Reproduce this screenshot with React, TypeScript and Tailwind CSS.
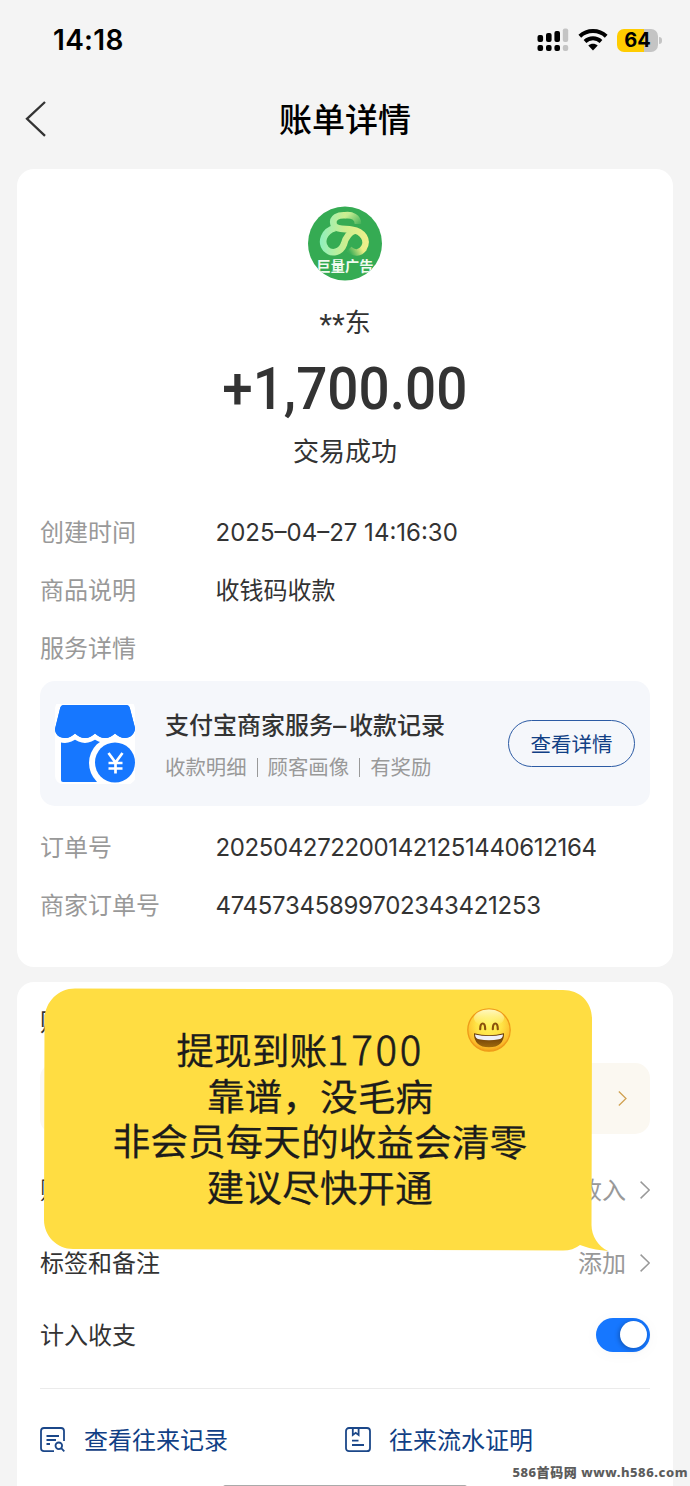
import type { ReactNode } from "react";

function StatusBar() {
  return (
    <header className="flex h-[80px] items-center justify-between pl-[53px] pr-[28px]">
      <span className="font-['Inter'] text-[28px] font-semibold leading-[80px] tracking-[0.3px] text-black">14:18</span>
      <div className="flex items-center">
        <svg width="32" height="24" viewBox="0 0 32 24" fill="#000">
          <rect x="0.5" y="7" width="5.6" height="7" rx="2" />
          <rect x="9" y="5" width="5.6" height="9" rx="2" />
          <rect x="17.4" y="3" width="5.6" height="11" rx="2" />
          <rect x="25.8" y="0.4" width="5.4" height="13.6" rx="2" fill="#c4c4c4" />
          <rect x="0.5" y="17" width="5.6" height="6" rx="2" />
          <rect x="9" y="17" width="5.6" height="6" rx="2" />
          <rect x="17.4" y="17" width="5.6" height="6" rx="2" />
          <rect x="25.8" y="17" width="5.4" height="6" rx="2" fill="#c4c4c4" />
        </svg>
        <svg className="ml-[9px]" width="30" height="22" viewBox="0 0 30 22">
          <path d="M1.8 7.2C9.2 0.3 20.8 0.3 28.2 7.2" fill="none" stroke="#000" strokeWidth="4" />
          <path d="M7 12.4C11.6 8.2 18.4 8.2 23 12.4" fill="none" stroke="#000" strokeWidth="4" />
          <path d="M10.3 16.6C13 14.2 17 14.2 19.7 16.6L15 21.4Z" fill="#000" />
        </svg>
        <div className="ml-[9px] flex h-[23px] w-[41px] items-center justify-center rounded-[7px] bg-linear-to-r from-[#ffcc00] from-65% to-[#c4c4c4] to-65%">
          <span className="font-['Inter'] text-[20px] font-bold leading-[23px] text-black">64</span>
        </div>
        <div className="ml-[1px] h-[7px] w-[3px] rounded-r-full bg-[#c4c4c4]" />
      </div>
    </header>
  );
}

function Avatar() {
  return (
    <svg width="74" height="75" viewBox="0 0 74 75">
      <defs>
        <linearGradient id="ribbon" x1="12" y1="0" x2="62" y2="0" gradientUnits="userSpaceOnUse">
          <stop offset="0" stopColor="#8ff0bd" />
          <stop offset="0.5" stopColor="#ccee90" />
          <stop offset="1" stopColor="#f3f08a" />
        </linearGradient>
        <linearGradient id="upper" x1="40" y1="6" x2="53" y2="19" gradientUnits="userSpaceOnUse">
          <stop offset="0.1" stopColor="#c6ed92" />
          <stop offset="1" stopColor="#3cae56" />
        </linearGradient>
        <linearGradient id="lower" x1="54" y1="40" x2="42" y2="47" gradientUnits="userSpaceOnUse">
          <stop offset="0.1" stopColor="#ecef86" />
          <stop offset="1" stopColor="#3cae56" />
        </linearGradient>
        <clipPath id="disc"><circle cx="37" cy="37.5" r="37" /></clipPath>
      </defs>
      <circle cx="37" cy="37.5" r="37" fill="#35ab53" />
      <g fill="none" strokeWidth="6.6">
        <path d="M37 9.3C44 8.5 50 11 50 18" stroke="url(#upper)" />
        <path d="M56 42C52 47.5 46 48 41 43" stroke="url(#lower)" />
        <path d="M27 22C16 25 12 36 18 43C24 49 33 46 36 38C37.5 32 40 27 47 24.5" stroke="url(#ribbon)" />
        <path d="M38 9.3C30 8.5 24 12 25.5 18C27 24 36 22.5 44 23.8C55 25.5 61 34 55.5 42.5" stroke="url(#ribbon)" />
      </g>
      <text x="37" y="65" textAnchor="middle" fontFamily="'Noto Sans CJK SC', sans-serif" fontWeight="700" fontSize="14.2" fill="#f0faf0" clipPath="url(#disc)">巨量广告</text>
    </svg>
  );
}

const awning =
  "M9 1H71Q74 1 74.8 4L80 24C80 30 75 34 70 34C66 34 63 32 60 29.5C57 32 54 34 50 34C46 34 43 32 40 29.5C37 32 34 34 30 34C26 34 23 32 20 29.5C17 32 14 34 10 34C4 34 0 30 0 25L5.2 4Q6 1 9 1Z";

function ShopIcon() {
  return (
    <svg width="80" height="80" viewBox="0 0 80 80">
      <rect width="80" height="80" rx="8" fill="#fff" />
      <path d="M6 34H60V78H8Q6 78 6 76Z" fill="#1677ff" />
      <path d={awning} fill="#1677ff" stroke="#fff" strokeWidth="10" paintOrder="stroke" clipPath="inset(0)" />
      <circle cx="60" cy="59" r="26" fill="#fff" />
      <path d={awning} fill="#1677ff" />
      <circle cx="60" cy="58.5" r="20" fill="#1677ff" />
      <path d="M53.5 49L60.5 58.5L67.5 49M60.5 58V69.5M53.5 59H67.5M53.5 64.5H67.5" fill="none" stroke="#fff" strokeWidth="2.7" />
    </svg>
  );
}

function Chevron({ className }: { className: string }) {
  return (
    <svg className={className} viewBox="0 0 10 18" fill="none" stroke="currentColor" strokeWidth="1.5">
      <path d="M0.6 0.6L9.2 9L0.6 17.4" />
    </svg>
  );
}

function DetailRow({ label, children, tracking = "" }: { label: string; children?: ReactNode; tracking?: string }) {
  return (
    <div className="flex h-[58px] items-center pt-[1px] text-[24px] leading-[36px]">
      <span className="w-[175.5px] shrink-0 text-[#999]">{label}</span>
      <span className={`whitespace-nowrap text-[#333] ${tracking}`}>{children}</span>
    </div>
  );
}

function GrinningFace() {
  return (
    <svg width="44" height="44" viewBox="0 0 44 44">
      <defs>
        <radialGradient id="face" cx="0.5" cy="0.36" r="0.68">
          <stop offset="0" stopColor="#fff35c" />
          <stop offset="0.45" stopColor="#ffe345" />
          <stop offset="0.8" stopColor="#fcbd2b" />
          <stop offset="1" stopColor="#ee8f0c" />
        </radialGradient>
        <linearGradient id="shine" x1="0" y1="0" x2="0" y2="1">
          <stop offset="0" stopColor="#fffbd0" stopOpacity="0.9" />
          <stop offset="1" stopColor="#fff9a0" stopOpacity="0" />
        </linearGradient>
        <linearGradient id="mouth" x1="0" y1="0" x2="0" y2="1">
          <stop offset="0" stopColor="#5c2f06" />
          <stop offset="1" stopColor="#a06a0c" />
        </linearGradient>
      </defs>
      <circle cx="22" cy="22" r="21.2" fill="url(#face)" stroke="#ee9a18" strokeWidth="1.3" />
      <ellipse cx="22" cy="10" rx="15" ry="8.5" fill="url(#shine)" />
      <path d="M13.2 21.2C13.2 13.6 18.2 13.6 18.2 21.2M25.8 21.2C25.8 13.6 30.8 13.6 30.8 21.2" fill="none" stroke="#8a520c" strokeWidth="2.2" strokeLinecap="round" />
      <path d="M7 25.3Q22 29 37 25.3Q37 39.3 22 39.3Q7 39.3 7 25.3Z" fill="url(#mouth)" />
      <path d="M8 26.4Q22 29.8 36 26.4C36 29 34.5 31 32 31.3Q22 33 12 31.3C9.5 31 8 29 8 26.4Z" fill="#f0f0f6" />
    </svg>
  );
}

function Bubble() {
  return (
    <div className="absolute left-[44px] top-[988px] h-[264px] w-[565px]">
      <svg className="absolute inset-0" width="565" height="264" viewBox="0 0 565 264">
        <path d="M31 0.5L519 2C536 2 548 14 548 31L547.5 237C547.5 248 554 258 564 263C552 262 544 260 536 257Q529 262.5 519 262.5L29 261C13 261 0 248 0 232L0.5 31C1 14 14 0.5 31 0.5Z" fill="#ffdd42" />
      </svg>
      <p className="relative w-[552px] rotate-[0.2deg] pt-[38px] text-center text-[37.7px] leading-[45.6px] text-[#1c1c1c] [-webkit-text-stroke:0.2px_#1c1c1c]">
        <span className="relative left-[-20px]">
          提现到账<span className="font-['Noto_Sans_CJK_SC'] text-[40px] font-light tracking-[2.8px] [-webkit-text-stroke:0.7px_#1c1c1c]">1700</span>
        </span>
        <br />
        靠谱，没毛病
        <br />
        非会员每天的收益会清零
        <br />
        建议尽快开通
      </p>
      <div className="absolute left-[423px] top-[20px]">
        <GrinningFace />
      </div>
    </div>
  );
}

export default function App() {
  return (
    <main className="relative h-[1486px] w-[690px] overflow-hidden bg-[#f4f4f4] font-['Inter','Noto_Sans_CJK_SC',sans-serif]">
      <StatusBar />
      <nav className="relative flex h-[89px] items-center justify-center pb-[9px]">
        <svg className="absolute left-[25px] top-[21px]" width="21" height="36" viewBox="0 0 21 36" fill="none" stroke="#333" strokeWidth="2.3">
          <path d="M20 1L2 17.8L20 34.8" />
        </svg>
        <h1 className="text-[33px] font-medium leading-[48px] text-black">账单详情</h1>
      </nav>

      <section className="mx-[17px] h-[798px] rounded-[17px] bg-white px-[23px] pt-[37px]">
        <div className="flex h-[297px] flex-col items-center text-[#333]">
          <Avatar />
          <p className="mt-[22px] flex text-[26px] leading-[40px]">
            <span className="relative top-[3px] font-['Liberation_Sans'] text-[33px]">**</span>
            <span>东</span>
          </p>
          <p className="mt-[8px] origin-center scale-x-[0.93] font-['Roboto'] text-[59px] font-medium leading-[76px]">+1,700.00</p>
          <p className="mt-[5px] text-[26px] leading-[40px]">交易成功</p>
        </div>
        <DetailRow label="创建时间">2025–04–27 14:16:30</DetailRow>
        <DetailRow label="商品说明">收钱码收款</DetailRow>
        <DetailRow label="服务详情" />
        <div className="mt-[4px] mb-[12px] flex h-[125px] items-center rounded-[15px] bg-[#f5f7fb] pl-[15px] pr-[15px]">
          <ShopIcon />
          <div className="ml-[30px] flex-1 whitespace-nowrap pt-[4px]">
            <p className="text-[24px] font-medium leading-[36px] text-[#333]">
              支付宝商家服务<span className="inline-block w-[16px] origin-left scale-x-110">–</span>收款记录
            </p>
            <p className="mt-[8px] flex items-center text-[20.4px] leading-[32px] text-[#999]">
              收款明细<i className="mx-[10px] h-[19px] w-px bg-[#999]" />顾客画像<i className="mx-[10px] h-[19px] w-px bg-[#999]" />有奖励
            </p>
          </div>
          <button className="h-[47px] w-[127px] rounded-full border border-[#2c5ba4] pt-px text-[20.5px] leading-[45px] text-[#113f85]">查看详情</button>
        </div>
        <DetailRow label="订单号" tracking="tracking-[-0.38px]">2025042722001421251440612164</DetailRow>
        <DetailRow label="商家订单号" tracking="tracking-[-0.3px]">47457345899702343421253</DetailRow>
      </section>

      <section className="mx-[17px] mt-[15px] h-[520px] rounded-t-[17px] bg-white px-[23px] pt-[22px] text-[24px] text-[#333]">
        <h2 className="h-[36px] font-medium leading-[38px]">账单管理</h2>
        <div className="mt-[23px] flex h-[71px] items-center justify-end rounded-[15px] bg-[#fbf8f1] pr-[23px]">
          <Chevron className="h-[15px] w-[9px] text-[#d0a050]" />
        </div>
        <div className="mt-[19px] flex h-[73px] items-center justify-between">
          <span className="pt-[2px]">账单分类</span>
          <span className="flex items-center gap-[14px] text-[#999]"><span className="pt-[2px]">收入</span><Chevron className="h-[18px] w-[10px]" /></span>
        </div>
        <div className="flex h-[73px] items-center justify-between">
          <span className="pt-[2px]">标签和备注</span>
          <span className="flex items-center gap-[14px] text-[#999]"><span className="pt-[2px]">添加</span><Chevron className="h-[18px] w-[10px]" /></span>
        </div>
        <div className="flex h-[71px] items-center justify-between">
          <span className="pt-[2px]">计入收支</span>
          <div className="flex h-[34px] w-[54px] items-center justify-end rounded-full bg-[#1677ff] pr-[3px] shadow-[0_2px_16px_rgba(0,0,0,0.03)]">
            <div className="size-[27px] rounded-full bg-white shadow-[-1px_1px_5px_rgba(0,0,0,0.3)]" />
          </div>
        </div>
        <div className="mt-[18px] flex h-[103px] items-center border-t-[1.5px] border-[#ebebeb] text-[#113f85]">
          <a className="flex w-[305px] items-center">
            <svg width="26" height="26" viewBox="0 0 26 26" fill="none" stroke="#1b4789" strokeWidth="1.8">
              <path d="M14 24.2H4Q1 24.2 1 21.2V4Q1 1 4 1H21Q24 1 24 4V14M6.5 9H19M6.5 13H16M6.5 17H10" />
              <circle cx="18.8" cy="18.8" r="3.3" />
              <path d="M21.2 21.2L24.3 24.3" />
            </svg>
            <span className="ml-[18px] pt-[2px]">查看往来记录</span>
          </a>
          <a className="flex items-center">
            <svg width="26" height="26" viewBox="0 0 26 26" fill="none" stroke="#1b4789" strokeWidth="1.8">
              <rect x="1" y="1" width="24" height="23.2" rx="3" />
              <path d="M7.8 1V8L10.7 5.8L13.6 8V1M7 13.6H13.5M7 18H19" />
            </svg>
            <span className="ml-[18px] pt-[2px]">往来流水证明</span>
          </a>
        </div>
      </section>

      <Bubble />
      <div className="absolute left-[223px] top-[1485px] h-[5px] w-[244px] rounded-full bg-[#aaa]" />
      <p className="absolute right-[2px] top-[1462px] whitespace-nowrap font-['Noto_Sans','Noto_Sans_CJK_SC',sans-serif] text-[13px] font-extrabold leading-[20px] tracking-[0.55px] text-[#5c5c5c]">586首码网 www.h586.com</p>
    </main>
  );
}
